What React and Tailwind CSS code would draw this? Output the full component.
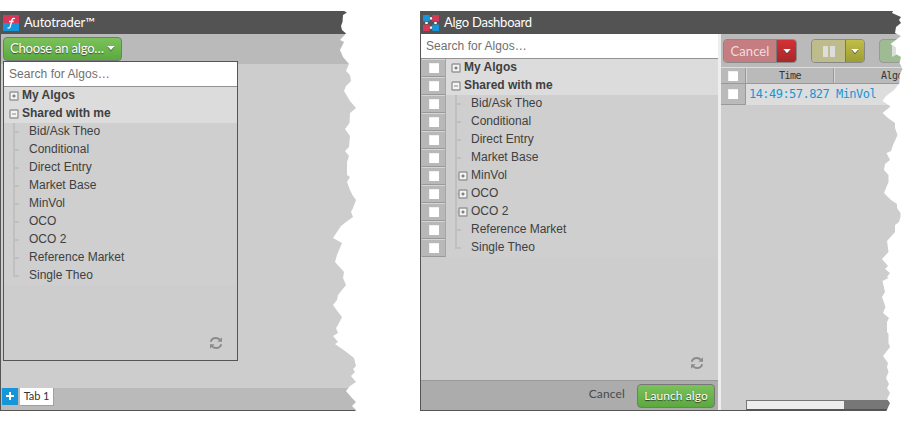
const algos = [
  'Bid/Ask Theo', 'Conditional', 'Direct Entry', 'Market Base', 'MinVol',
  'OCO', 'OCO 2', 'Reference Market', 'Single Theo',
];
const expandable = ['MinVol', 'OCO', 'OCO 2'];

function Toggle({ open = false }) {
  return (
    <svg className="block h-[10px] w-[10px] shrink-0" viewBox="0 0 10 10">
      <rect x="1" y="1" width="8" height="8" rx="0.5" fill="#f4f4f4" stroke="#979797" strokeWidth="1.4" />
      {open ? <path d="M3 5h4" stroke="#888" /> : <path d="M3.5 5h3M5 3.5v3" stroke="#777" strokeWidth="1.3" />}
    </svg>
  );
}

function Refresh() {
  return (
    <svg className="h-[14px] w-[14px]" viewBox="0 0 14 14" fill="none" stroke="#8b8b8b" strokeWidth="1.9">
      <path d="M1.7 5.8C2.6 3 4.5 2 6.8 2c1.9 0 3.2.7 4.2 1.9M12.3 8.2C11.4 11 9.5 12 7.2 12c-1.9 0-3.2-.7-4.2-1.9" />
      <path d="M13 1.2v4.6H8.4zM1 12.8V8.2h4.6z" fill="#8b8b8b" stroke="none" />
    </svg>
  );
}

function Branch({ last }) {
  return (
    <span className="flex h-[18px] w-[6px] shrink-0">
      <span className={last ? 'h-[10px] w-[2px] bg-[#c0c0c0]' : 'h-[18px] w-[2px] bg-[#c0c0c0]'} />
      <span className="mt-[8px] h-[2px] w-[4px] bg-[#c0c0c0]" />
    </span>
  );
}

function Group({ label, open }) {
  return (
    <div className="flex h-[18px] items-start bg-[#dcdcdc] text-[12px] leading-[17px] font-bold text-[#404040]">
      <span className="mt-[4px] mr-[3px] ml-[5px]"><Toggle open={open} /></span>
      {label}
    </div>
  );
}

function Tree({ nested }) {
  return (
    <div className="grow bg-[#cfcfcf]">
      <Group label="My Algos" />
      <Group label="Shared with me" open />
      {algos.map((name, i) => (
        <div key={name} className="flex h-[18px] items-start pl-[9px] text-[12px] leading-[17px] text-[#404040]">
          <Branch last={i === algos.length - 1} />
          <span className="mt-[4px] -ml-[3px] h-[10px] w-[13px] shrink-0">
            {nested && expandable.includes(name) && <Toggle />}
          </span>
          {name}
        </div>
      ))}
    </div>
  );
}

function Box() {
  return <span className="h-[10px] w-[10px] shrink-0 bg-white shadow-[inset_1px_1px_0_#f0f0f0]" />;
}

function Search() {
  return <div className="h-[25px] shrink-0 border-b border-[#929292] bg-white pl-[5px] text-[12px] leading-[24px] tracking-[0.04px] text-[#707070]">Search for Algos…</div>;
}

function Caret() {
  return <svg className="h-[5px] w-[8px] shrink-0 overflow-visible" viewBox="0 0 8 5"><path d="M.5 1h7L4 5.3z" fill="#444" /><path d="M.3 0h7.4L4 4.3z" fill="white" /></svg>;
}

function AutotraderLogo() {
  return (
    <svg className="h-4 w-4" viewBox="0 0 16 16">
      <path d="M0 0h16v8H0z" fill="#d9375a" /><path d="M0 8h16v8H0z" fill="#1696d8" />
      <path d="M11.6 4.1c-.3-1.2-2-1.1-2.5.6L7.2 11.6c-.4 1.5-1.8 1.9-2.6 1M6 6.5h4.6" stroke="white" strokeWidth="1.3" fill="none" />
    </svg>
  );
}

function DashboardLogo() {
  return (
    <svg className="h-4 w-4" viewBox="0 0 16 16">
      <path d="M0 0h6.7v6.5H0zM9.3 9.5H16V16H9.3z" fill="#1696d8" />
      <path d="M9.3 0H16v6.5H9.3zM0 9.5h6.7V16H0z" fill="#d9375a" />
      <path d="M6.9 2.3h2.2v2.2H6.9zM6.9 11.5h2.2v2.2H6.9zM2.3 6.9h2.4v2.2H2.3zM11.3 6.9h2.4v2.2h-2.4z" fill="white" />
    </svg>
  );
}

function Autotrader() {
  return (
    <section className="relative flex h-[400px] w-[357px] shrink-0 flex-col border-b border-l border-[#555] bg-[#cdcdcd]">
      <header className="flex h-[23px] shrink-0 items-center gap-[5px] bg-[#535353] pl-[2px] font-['Lato',sans-serif] text-[13px] tracking-[-0.13px] text-white">
        <AutotraderLogo />Autotrader™
      </header>
      <div className="h-[30px] shrink-0 bg-[#bababa] pt-[3px] pl-[2px]">
        <button className="flex h-[24px] w-[119px] items-center justify-between rounded-[4px] border border-[#777] bg-linear-to-b from-[#7cc15c] to-[#5aaa3d] px-[6px] pb-[1px] font-['Lato',sans-serif] text-[13px] tracking-[-0.2px] whitespace-nowrap text-white [text-shadow:0_1px_1px_#444]">
          Choose an algo… <Caret />
        </button>
      </div>
      <div className="relative z-10 -mt-[3px] ml-[2px] flex h-[300px] w-[235px] shrink-0 flex-col border border-[#555] bg-[#cdcdcd]">
        <Search />
        <div className="flex"><Tree /></div>
        <div className="mt-auto flex justify-end pr-[14px] pb-[10px]"><Refresh /></div>
      </div>
      <footer className="mt-auto flex h-[22px] items-start gap-[2px] bg-[#bababa] pl-[1px]">
        <span className="flex h-[17px] w-4 items-center justify-center bg-[#1696d8] pb-[2px]">
          <svg className="h-2 w-2" viewBox="0 0 8 8"><path d="M0 4h8M4 0v8" stroke="white" strokeWidth="2" /></svg>
        </span>
        <span className="h-[18px] w-[34px] border-r border-b border-[#a0a0a0] bg-white text-center font-['Lato',sans-serif] text-[11px] leading-[15px] tracking-[-0.1px] text-[#333]">Tab 1</span>
      </footer>
      <svg className="absolute top-0 -left-px h-[401px] w-[360px]" viewBox="0 11 360 401">
        <path fill="white" d="M360 11H344L347 12.5 343 15 342.5 22 341 26 342 30 346 33.5 340 40 344 42 342 46 340 50 343 57 349 64 346 71 350 75 351 81 346 86 344 91 347 96 350 101 356 108 350 113 349.5 123 345 129 350 136 349 147 345 151 349 156 347 162 347 175 350 177 347 182 350 190 353 196 356 200 353 208 351 212 353 217 346 222 341 226 333 238 342 243 337 255 335 262 344 272 343 278 346 285 342 290 338 295 337 300 333 305 338 312 342 317 338 325 336 328 338 333 333 336 338 342 335 344 345 351 354 358 356 366 353 369 355 372 351 376 356 382 350 386 346 391 352 398 356 402 352 406 356 410 354 412H360z" />
      </svg>
    </section>
  );
}

function Dashboard() {
  return (
    <section className="relative flex h-[400px] w-[484px] shrink-0 flex-col border-b border-l border-[#555] bg-[#cdcdcd]">
      <header className="flex h-[23px] shrink-0 items-center gap-[5px] bg-[#535353] pl-[2px] font-['Lato',sans-serif] text-[13px] tracking-[-0.24px] text-white">
        <DashboardLogo />Algo Dashboard
      </header>
      <div className="flex min-h-0 grow">
        <div className="flex w-[297px] shrink-0 flex-col">
          <Search />
          <div className="flex">
            <div className="w-[25px] shrink-0 border-r border-[#a5a5a5] bg-[#b8b8b8] pl-[1px]">
              {Array.from({ length: 11 }, (_, i) => (
                <div key={i} className="flex h-[18px] items-center justify-center border-t border-b border-t-[#d5d5d5] border-b-[#999]"><Box /></div>
              ))}
            </div>
            <Tree nested />
          </div>
          <div className="mt-auto flex justify-end pr-[14px] pb-[10px]"><Refresh /></div>
          <div className="flex h-[30px] items-center justify-end border-t border-[#999] bg-[#acacac] pr-[3px] font-['Lato',sans-serif] text-[12px]">
            <span className="mr-[12px] pb-[3px] tracking-[0.15px] text-[#4a4a4a]">Cancel</span>
            <button className="h-[24px] w-[78px] rounded-[4px] border border-[#777] bg-linear-to-b from-[#7cc15c] to-[#5aaa3d] text-[12px] leading-[22px] tracking-[0.08px] whitespace-nowrap text-white [text-shadow:0_1px_1px_#333]">Launch algo</button>
          </div>
        </div>
        <div className="w-[3px] shrink-0 bg-[#eeeeee]" />
        <div className="flex min-w-0 grow flex-col overflow-hidden">
          <div className="flex h-[33px] shrink-0 items-start bg-[#bababa] pt-[5px] pl-[2px]">
            <div className="flex h-[24px] w-[74px] shrink-0 overflow-hidden rounded-[4px] border border-[#888] font-['Lato',sans-serif] text-[13px] text-[#eedede]">
              <span className="w-[52px] shrink-0 bg-[#c67d82] text-center leading-[22px] tracking-[0.1px]">Cancel</span>
              <span className="flex grow items-center justify-center border-l border-[#777] bg-linear-to-b from-[#d33135] to-[#a92729]"><Caret /></span>
            </div>
            <div className="ml-[14px] flex h-[24px] w-[54px] shrink-0 overflow-hidden rounded-[4px] border border-[#888]">
              <span className="flex w-[33px] shrink-0 items-center justify-center gap-[2px] bg-[#bebb8c]"><span className="h-[11px] w-[5px] bg-[#dddddd]" /><span className="h-[11px] w-[5px] bg-[#dddddd]" /></span>
              <span className="flex grow items-center justify-center border-l border-[#777] bg-linear-to-b from-[#bfbe47] to-[#9e9d34]"><Caret /></span>
            </div>
            <div className="ml-[14px] flex h-[24px] w-[54px] shrink-0 items-center rounded-[4px] border border-[#999] bg-[#9fbb94] pl-[12px]">
              <svg className="h-[12px] w-[12px]" viewBox="0 0 12 12"><path d="M0 0L12 6 0 12z" fill="#dddddd" /></svg>
            </div>
          </div>
          <div className="flex h-[17px] shrink-0 border-t border-b border-t-[#dddddd] border-b-[#999] bg-[#bababa] font-['DejaVu_Sans_Mono',monospace] text-[10px] leading-[15px] tracking-[-0.5px] text-[#333]">
            <span className="flex w-[25px] shrink-0 items-center justify-center border-r border-[#999]"><Box /></span>
            <span className="w-[88px] shrink-0 border-r border-l border-r-[#999] border-l-[#d5d5d5] text-center">Time</span>
            <span className="w-[115px] shrink-0 border-l border-[#d5d5d5] text-center">Algo</span>
          </div>
          <div className="flex h-[21px] shrink-0 bg-[#dddddd] font-['DejaVu_Sans_Mono',monospace] text-[12px] leading-[21px] tracking-[-0.54px] whitespace-nowrap text-[#1696d8]">
            <span className="flex w-[25px] shrink-0 items-center justify-center border-r border-b border-[#999] bg-[#bababa]"><Box /></span>
            <span className="w-[87px] shrink-0 pl-[3px]">14:49:57.827</span>
            <span className="pl-[3px]">MinVol</span>
          </div>
          <div className="mt-auto ml-[25px] flex h-[10px] w-[158px] border border-b-[#555] border-[#777] bg-[#777]"><span className="w-[97px] bg-[#eeeeee]" /></div>
        </div>
      </div>
      <svg className="absolute top-0 -left-px h-[401px] w-[488px]" viewBox="420 11 488 401">
        <path fill="white" d="M908 11H893L892 13 901 17 899 20 901 23 896 27 895 33 901 36 890.5 44 896 47.5 896 54 901 57 899.5 63 902.5 69 899.5 75 899.5 83 894 90 886 96 882.5 101 890.5 106.5 882.5 113 888 118 895 123 895 128 897.5 135 893 145 891 151 886.5 153 890 160 885 164 884 170 888.5 175 888.5 182 884 193 891 200 897 204 897 208 900.5 213 900.5 217 899 222 895 225 895 232 887 241 888.5 252 882 259 888 266 885 269 890 273 887 277 888.5 278 882.5 281 885 292 882 297 885.5 307 883 313 889 318 887 322 887 332 888.5 334 888.5 343 890 347 883 356 888 363 887 367 888.5 372 886 378 889 384 887 388 890 393 887 399 890 403 886 412H908z" />
      </svg>
    </section>
  );
}

export default function App() {
  return (
    <main className="flex h-[422px] w-[908px] gap-[63px] overflow-hidden bg-white pt-[11px] font-['Liberation_Sans',Arial,sans-serif]">
      <Autotrader />
      <Dashboard />
    </main>
  );
}
